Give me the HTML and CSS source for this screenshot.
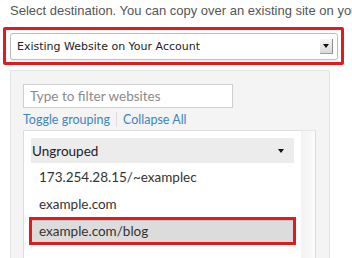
FILE: index.html
```html
<!DOCTYPE html>
<html lang="en">
<head>
    <meta charset="UTF-8">
    <title>Copy Website</title>
    <link rel="stylesheet" href="styles.css">
</head>
<body>

    <p class="intro">Select destination. You can copy over an existing site on your account or create a new one.</p>

    <div class="destination">
        <div class="select">
            <span>Existing Website on Your Account</span>
            <span class="select-arrow"><span class="caret"></span></span>
        </div>
    </div>

    <div class="panel">
        <input type="text" class="filter" placeholder="Type to filter websites">

        <div class="links">
            <a href="#">Toggle grouping</a>
            <a href="#">Collapse All</a>
        </div>

        <div class="sites">
            <ul class="site-list">
                <li class="group">
                    <span>Ungrouped</span>
                    <span class="caret"></span>
                </li>
                <li class="site">173.254.28.15/~examplec</li>
                <li class="site">example.com</li>
                <li class="site selected">example.com/blog</li>
            </ul>
            <div class="scrollbar"></div>
        </div>
    </div>

</body>
</html>
```

FILE: styles.css
```css
body {
    margin: 0;
    background-color: #fff;
    font-family: 'Liberation Sans', Arial, sans-serif;
    overflow: hidden;
    width: 352px;
    height: 258px;
}
.intro {
    margin: 0;
    padding: 3px 0 0 10px;
    font-size: 13px;
    line-height: 15px;
    color: #555;
    white-space: nowrap;
    overflow: hidden;
}
.destination {
    margin: 9px 0 0 3px;
    width: 328px;
    padding: 3px 3px 2px 4px;
    border: 3px solid #e01a1f;
    border-radius: 2px;
}
.select {
    display: flex;
    align-items: center;
    justify-content: space-between;
    height: 25px;
    padding: 0 4px 0 6px;
    background-color: #fff;
    border: 1px solid #bdbdbd;
    border-radius: 3px;
    box-shadow: 0 1px 1px rgba(0, 0, 0, 0.08);
    font-family: 'DejaVu Sans', sans-serif;
    font-size: 11px;
    color: #222;
}
.select-arrow {
    display: flex;
    align-items: center;
    justify-content: center;
    width: 12px;
    height: 14px;
    background: linear-gradient(#f6f6f6, #d9d9d9);
    border-right: 1px solid #8a8a8a;
    border-bottom: 1px solid #a0a0a0;
}
.caret {
    width: 0;
    height: 0;
    border-left: 3px solid transparent;
    border-right: 3px solid transparent;
    border-top: 4px solid #111;
}
.panel {
    margin: 5px 0 0 10px;
    width: 306px;
    height: 200px;
    padding: 13px 0 0 12px;
    background-color: #f4f4f4;
    border: 1px solid #e3e3e3;
}
.filter {
    display: block;
    box-sizing: border-box;
    width: 210px;
    height: 24px;
    margin: 0;
    padding: 0 6px;
    border: 1px solid #cfcfcf;
    background-color: #fff;
    font-family: 'Lato', sans-serif;
    font-size: 13.5px;
    color: #333;
}
.filter::placeholder {
    color: #8a8a8a;
}
.links {
    display: flex;
    align-items: center;
    height: 22px;
    font-family: 'Lato', sans-serif;
    font-size: 12.5px;
}
.links a {
    color: #3a86c0;
    text-decoration: none;
}
.links a + a {
    margin-left: 6px;
    padding-left: 6px;
    border-left: 1px solid #dcdcdc;
    line-height: 15px;
}
.sites {
    display: flex;
    width: 293px;
    height: 140px;
}
.site-list {
    list-style-type: none;
    margin: 0;
    padding: 7px 7px 0 7px;
    width: 264px;
    background-color: #fff;
    border-top: 1px solid #dedede;
    border-left: 1px solid #dedede;
    font-family: 'Lato', sans-serif;
    font-size: 13.5px;
}
.group {
    display: flex;
    align-items: center;
    justify-content: space-between;
    height: 25px;
    padding: 0 10px 0 1px;
    background-color: #ececec;
    color: #222;
}
.site {
    display: flex;
    align-items: center;
    height: 27px;
    padding-left: 8px;
    color: #333;
}
.site.selected {
    margin: 0 -2px;
    height: 22px;
    padding-left: 7px;
    background-color: #dcdcdc;
    border: 3px solid #e01a1f;
    box-shadow: inset 0 1px 0 #c4c4c4;
}
.scrollbar {
    width: 14px;
    background: linear-gradient(to right, #f2f2f2, #fbfbfb);
    border-top: 1px solid #e6e6e6;
    border-right: 1px solid #dcdcdc;
}
```
